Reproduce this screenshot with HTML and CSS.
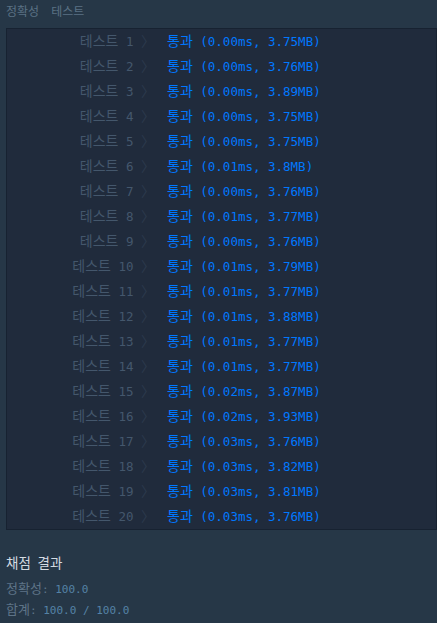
FILE: index.html
```html
<!DOCTYPE html>
<html lang="ko">

<head>
    <meta charset="UTF-8">
    <meta name="viewport" content="width=device-width, initial-scale=1.0">
    <title>채점 결과</title>
    <link rel="stylesheet" href="styles.css">
</head>

<body>
    <div class="console">
        <p class="console-heading"><span class="ko">정확성</span>  <span class="ko">테스트</span></p>

        <div class="result-box">
            <div class="row"><span class="label"><span class="ko">테스트</span> 1 <span class="arrow">〉</span></span><span class="passed"><span class="ko">통과</span> (0.00ms, 3.75MB)</span></div>
            <div class="row"><span class="label"><span class="ko">테스트</span> 2 <span class="arrow">〉</span></span><span class="passed"><span class="ko">통과</span> (0.00ms, 3.76MB)</span></div>
            <div class="row"><span class="label"><span class="ko">테스트</span> 3 <span class="arrow">〉</span></span><span class="passed"><span class="ko">통과</span> (0.00ms, 3.89MB)</span></div>
            <div class="row"><span class="label"><span class="ko">테스트</span> 4 <span class="arrow">〉</span></span><span class="passed"><span class="ko">통과</span> (0.00ms, 3.75MB)</span></div>
            <div class="row"><span class="label"><span class="ko">테스트</span> 5 <span class="arrow">〉</span></span><span class="passed"><span class="ko">통과</span> (0.00ms, 3.75MB)</span></div>
            <div class="row"><span class="label"><span class="ko">테스트</span> 6 <span class="arrow">〉</span></span><span class="passed"><span class="ko">통과</span> (0.01ms, 3.8MB)</span></div>
            <div class="row"><span class="label"><span class="ko">테스트</span> 7 <span class="arrow">〉</span></span><span class="passed"><span class="ko">통과</span> (0.00ms, 3.76MB)</span></div>
            <div class="row"><span class="label"><span class="ko">테스트</span> 8 <span class="arrow">〉</span></span><span class="passed"><span class="ko">통과</span> (0.01ms, 3.77MB)</span></div>
            <div class="row"><span class="label"><span class="ko">테스트</span> 9 <span class="arrow">〉</span></span><span class="passed"><span class="ko">통과</span> (0.00ms, 3.76MB)</span></div>
            <div class="row"><span class="label"><span class="ko">테스트</span> 10 <span class="arrow">〉</span></span><span class="passed"><span class="ko">통과</span> (0.01ms, 3.79MB)</span></div>
            <div class="row"><span class="label"><span class="ko">테스트</span> 11 <span class="arrow">〉</span></span><span class="passed"><span class="ko">통과</span> (0.01ms, 3.77MB)</span></div>
            <div class="row"><span class="label"><span class="ko">테스트</span> 12 <span class="arrow">〉</span></span><span class="passed"><span class="ko">통과</span> (0.01ms, 3.88MB)</span></div>
            <div class="row"><span class="label"><span class="ko">테스트</span> 13 <span class="arrow">〉</span></span><span class="passed"><span class="ko">통과</span> (0.01ms, 3.77MB)</span></div>
            <div class="row"><span class="label"><span class="ko">테스트</span> 14 <span class="arrow">〉</span></span><span class="passed"><span class="ko">통과</span> (0.01ms, 3.77MB)</span></div>
            <div class="row"><span class="label"><span class="ko">테스트</span> 15 <span class="arrow">〉</span></span><span class="passed"><span class="ko">통과</span> (0.02ms, 3.87MB)</span></div>
            <div class="row"><span class="label"><span class="ko">테스트</span> 16 <span class="arrow">〉</span></span><span class="passed"><span class="ko">통과</span> (0.02ms, 3.93MB)</span></div>
            <div class="row"><span class="label"><span class="ko">테스트</span> 17 <span class="arrow">〉</span></span><span class="passed"><span class="ko">통과</span> (0.03ms, 3.76MB)</span></div>
            <div class="row"><span class="label"><span class="ko">테스트</span> 18 <span class="arrow">〉</span></span><span class="passed"><span class="ko">통과</span> (0.03ms, 3.82MB)</span></div>
            <div class="row"><span class="label"><span class="ko">테스트</span> 19 <span class="arrow">〉</span></span><span class="passed"><span class="ko">통과</span> (0.03ms, 3.81MB)</span></div>
            <div class="row"><span class="label"><span class="ko">테스트</span> 20 <span class="arrow">〉</span></span><span class="passed"><span class="ko">통과</span> (0.03ms, 3.76MB)</span></div>
        </div>

        <p class="summary-title"><span class="ko">채점</span> <span class="ko">결과</span></p>
        <p class="summary-line"><span class="ko">정확성</span>: <span class="score">100.0</span></p>
        <p class="summary-line"><span class="ko">합계</span>: <span class="score">100.0 / 100.0</span></p>
    </div>
</body>

</html>
```

FILE: styles.css
```css
body {
    margin: 0;
    background-color: #263747;
    font-family: "DejaVu Sans Mono", "Noto Sans CJK KR", monospace;
}

.console {
    padding: 4px 0 0 6px;
}

.console p {
    margin: 0;
    white-space: pre;
}

/* hangul runs twice as wide as the latin cells */
.ko,
.arrow {
    font-family: "Noto Sans CJK KR", sans-serif;
    line-height: 1;
}

/* Heading above the test table */
.console-heading {
    font-size: 10px;
    height: 18px;
    line-height: 18px;
    color: #5a7184;
    margin-bottom: 6px !important;
}

.console-heading .ko {
    font-size: 12px;
}

/* Box holding the test rows */
.result-box {
    background-color: #202b3c;
    border: 1px solid #172231;
}

.row {
    display: grid;
    grid-template-columns: 148px 1fr;
    height: 25px;
    line-height: 25px;
    font-size: 12.5px;
    white-space: pre;
}

.row .ko {
    font-size: 14px;
}

.label {
    text-align: right;
    color: #44576c;
}

.arrow {
    font-size: 14px;
    color: #2c3a4d;
}

.passed {
    color: #0078ff;
    padding-left: 12px;
}

/* Score summary */
.summary-title {
    font-size: 11px;
    height: 20px;
    line-height: 20px;
    color: #d4dbe2;
    margin-top: 25px !important;
    margin-bottom: 4px !important;
}

.summary-title .ko {
    font-size: 13.5px;
}

.summary-line {
    font-size: 11px;
    height: 21px;
    line-height: 21px;
    color: #5e7487;
}

.summary-line .ko {
    font-size: 13px;
}

.score {
    color: #5582a6;
}
```
